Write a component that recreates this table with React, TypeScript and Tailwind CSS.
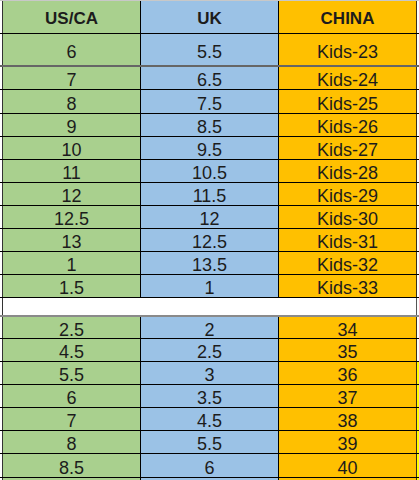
import React from "react";

type Row = { a: string; b: string; c: string; h: string; border: string; yellow?: boolean };

const rows: Row[] = [
  { a: "6", b: "5.5", c: "Kids-23", h: "h-[33px]", border: "border-b-2 border-black/60" },
  { a: "7", b: "6.5", c: "Kids-24", h: "h-[23px]", border: "border-b border-black" },
  { a: "8", b: "7.5", c: "Kids-25", h: "h-[24px]", border: "border-b border-black" },
  { a: "9", b: "8.5", c: "Kids-26", h: "h-[23px]", border: "border-b border-black" },
  { a: "10", b: "9.5", c: "Kids-27", h: "h-[23px]", border: "border-b border-black" },
  { a: "11", b: "10.5", c: "Kids-28", h: "h-[23px]", border: "border-b border-black" },
  { a: "12", b: "11.5", c: "Kids-29", h: "h-[23px]", border: "border-b border-black" },
  { a: "12.5", b: "12", c: "Kids-30", h: "h-[23px]", border: "border-b border-black" },
  { a: "13", b: "12.5", c: "Kids-31", h: "h-[23px]", border: "border-b border-black" },
  { a: "1", b: "13.5", c: "Kids-32", h: "h-[23px]", border: "border-b border-black" },
  { a: "1.5", b: "1", c: "Kids-33", h: "h-[23px]", border: "border-b border-black" },
];

const rows2: Row[] = [
  { a: "2.5", b: "2", c: "34", h: "h-[22px]", border: "border-b border-black" },
  { a: "4.5", b: "2.5", c: "35", h: "h-[23px]", border: "border-b border-black" },
  { a: "5.5", b: "3", c: "36", h: "h-[23px]", border: "border-b border-black", yellow: true },
  { a: "6", b: "3.5", c: "37", h: "h-[23px]", border: "border-b border-black", yellow: true },
  { a: "7", b: "4.5", c: "38", h: "h-[23px]", border: "border-b border-black", yellow: true },
  { a: "8", b: "5.5", c: "39", h: "h-[23px]", border: "border-b border-black", yellow: true },
  { a: "8.5", b: "6", c: "40", h: "h-[24px]", border: "border-b border-black", yellow: true },
];

function DataRow({ r }: { r: Row }) {
  return (
    <div className={`flex w-full ${r.h} ${r.border}`}>
      <div className="w-[2px] bg-white" />
      <div className="w-[1px] bg-[#333]" />
      <div className="flex w-[138px] items-center justify-center border-r border-black bg-[#A9D08E] pt-[4px]">
        <span className="leading-[22px]">{r.a}</span>
      </div>
      <div className="flex w-[138px] items-center justify-center border-r border-black bg-[#9BC2E6] pt-[4px]">
        <span className="leading-[22px]">{r.b}</span>
      </div>
      <div className="flex w-[138px] items-center justify-center border-r border-[#3a3020] bg-[#FFC000] pt-[4px]">
        <span className="leading-[22px]">{r.c}</span>
      </div>
      <div className={`flex-1 ${r.yellow ? "bg-[#FFFF00]" : "bg-white"}`} />
    </div>
  );
}

export default function App() {
  return (
    <div
      className="h-[480px] w-[419px] overflow-hidden bg-white text-[18px] text-[#1c1c1c]"
      style={{ fontFamily: '"Liberation Sans", Arial, sans-serif' }}
    >
      <div className="flex h-[34px] w-full border-t border-b border-t-[#c8c8c8] border-b-black font-bold text-[17px]">
        <div className="w-[2px] bg-white" />
        <div className="w-[1px] bg-[#333]" />
        <div className="flex w-[138px] items-center justify-center border-r border-black bg-[#A9D08E] pt-[4px]">
          <span className="leading-[20px]">US/CA</span>
        </div>
        <div className="flex w-[138px] items-center justify-center border-r border-black bg-[#9BC2E6] pt-[4px]">
          <span className="leading-[20px]">UK</span>
        </div>
        <div className="flex w-[138px] items-center justify-center border-r border-[#3a3020] bg-[#FFC000] pt-[4px]">
          <span className="leading-[20px]">CHINA</span>
        </div>
        <div className="flex-1 bg-white" />
      </div>
      {rows.map((r, i) => (
        <DataRow key={"a" + i} r={r} />
      ))}
      <div className="flex h-[19px] w-full border-b-2 border-[#8a8a8a]">
        <div className="w-[2px] bg-white" />
        <div className="w-[1px] bg-[#333]" />
        <div className="w-[414px] border-r border-[#555] bg-white" />
        <div className="flex-1 bg-white" />
      </div>
      {rows2.map((r, i) => (
        <DataRow key={"b" + i} r={r} />
      ))}
      <DataRow r={{ a: "", b: "", c: "", h: "h-[24px]", border: "border-b border-black", yellow: true }} />
    </div>
  );
}
